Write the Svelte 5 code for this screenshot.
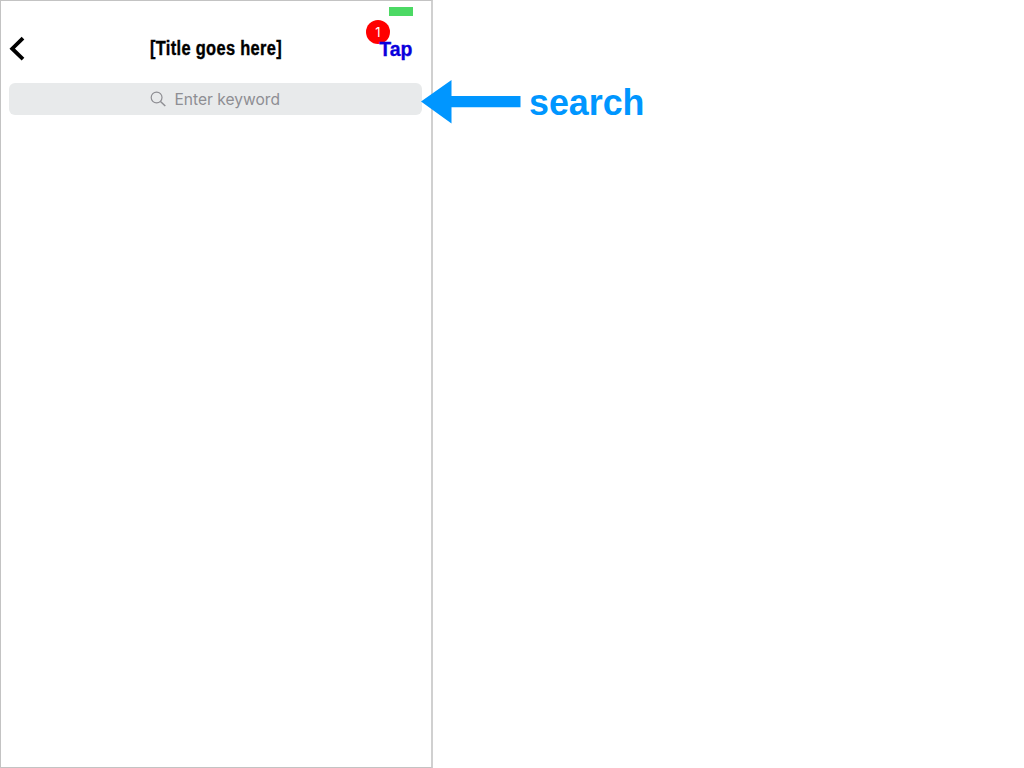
<script>
  let keyword = $state('');
</script>

<main>
  <section class="phone">
    <div class="status"><span class="battery"></span></div>
    <header>
      <button class="back" aria-label="Back">
        <svg width="16" height="26" viewBox="0 0 16 26"><path d="M14 2.2 3.2 12.7 14 23.2" fill="none" stroke="#000" stroke-width="3.8" /></svg>
      </button>
      <svg class="title" width="136" height="26"><text x="1" y="19.4" textLength="132" lengthAdjust="spacingAndGlyphs">[Title goes here]</text></svg>
      <div class="action">
        <span class="badge">1</span>
        <svg class="tap" width="36" height="26"><text x="1.2" y="20.4" textLength="33.2" lengthAdjust="spacingAndGlyphs">Tap</text></svg>
      </div>
    </header>
    <div class="search">
      <svg width="16" height="16" viewBox="0 0 16 16" fill="none" stroke="#8e8e93"><circle cx="6.6" cy="6.5" r="5.4" stroke-width="1.2" /><path d="m10.5 10.5 4.8 4.5" stroke-width="1.5" /></svg>
      <svg class="hint" width="108" height="24"><text x="1.5" y="17.5" textLength="105.5" lengthAdjust="spacingAndGlyphs">{keyword || 'Enter keyword'}</text></svg>
    </div>
  </section>
  <aside>
    <svg class="arrow" width="100" height="44" viewBox="0 0 100 44"><path d="M0 21.5 30.5 0v16H99.5v11.2h-69V43.5Z" fill="#0096ff" /></svg>
    <svg class="label" width="118" height="44"><text x="0" y="35.3" textLength="115.5" lengthAdjust="spacingAndGlyphs">search</text></svg>
  </aside>
</main>

<style>
  :global(body) { background: #fff; }
  main { display: flex; width: 1024px; height: 768px; overflow: hidden; font-family: "Liberation Sans", Arial, sans-serif; }
  svg { display: block; flex: none; overflow: visible; }
  .phone { box-sizing: border-box; width: 433px; height: 768px; flex: none; border: 1px solid #c3c3c3; border-right: 2px solid #d0d0d0; background: #fff; }
  .status { display: flex; justify-content: flex-end; height: 35px; padding: 6.4px 18px 0 0; box-sizing: border-box; }
  .battery { width: 24px; height: 9px; background: #4cd964; }
  header { display: flex; justify-content: space-between; height: 47px; padding: 0 17px 0 8px; box-sizing: border-box; }
  .back { border: 0; padding: 0; background: none; height: 26px; width: 16px; }
  .title { margin-left: 30px; }
  .title text { font-weight: 700; font-size: 20px; letter-spacing: 0.4px; stroke: #000; stroke-width: 0.4px; }
  .action { position: relative; }
  .tap { position: relative; }
  .tap text { font-weight: 700; font-size: 20px; fill: #0a00dc; stroke: #0a00dc; stroke-width: 0.3px; }
  .badge { position: absolute; left: -12px; top: -16.5px; width: 24px; height: 24px; border-radius: 50%; background: #f00; color: #fff; font: 13px/24px Inter, sans-serif; text-align: center; }
  .search { display: flex; align-items: center; justify-content: center; gap: 7px; width: 413px; height: 32px; margin-left: 8.4px; border-radius: 6px; background: #e8eaeb; }
  .hint text { font-family: Inter, sans-serif; font-size: 16px; fill: #8e8e93; }
  aside { display: flex; gap: 8px; height: 44px; margin: 80px 0 0 -12px; z-index: 1; }
  .label text { font-size: 36px; font-weight: 700; fill: #0096ff; }
</style>
